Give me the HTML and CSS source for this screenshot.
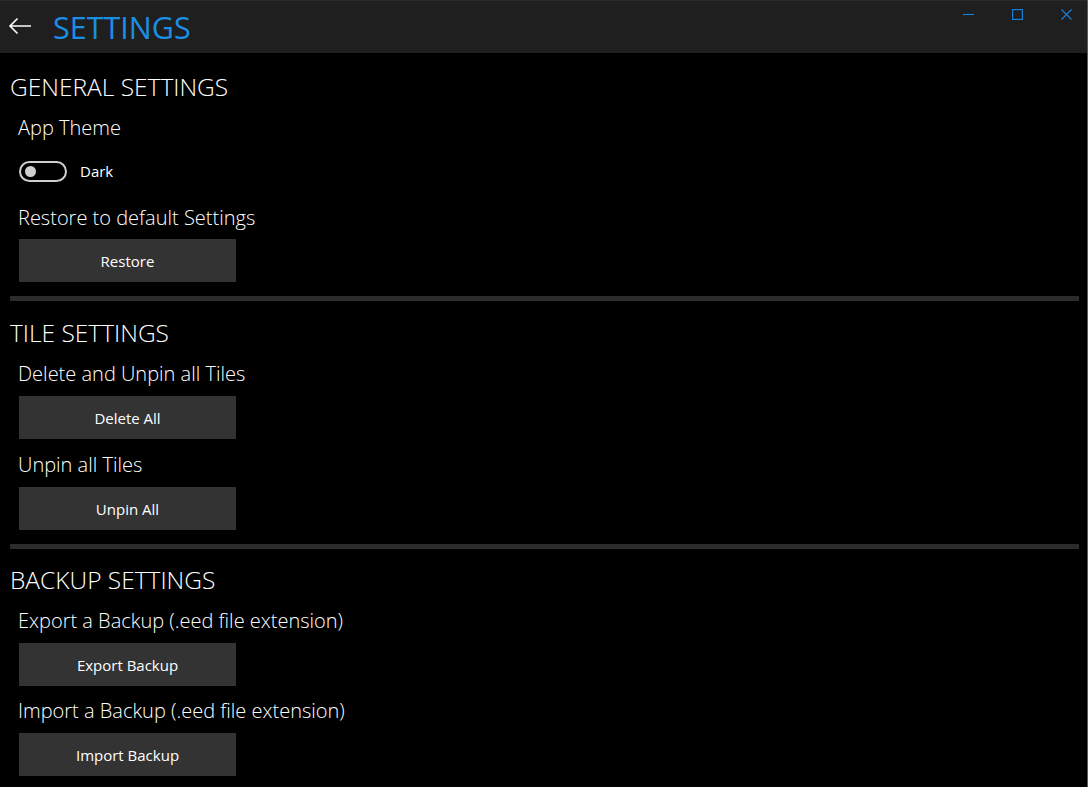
FILE: index.html
```html
<!DOCTYPE html>
<html>
<head>
<meta charset="utf-8">
<link rel="stylesheet" href="styles.css">
</head>
<body>
<div class="window">
  <header class="titlebar">
    <svg class="back" width="24" height="18" viewBox="0 0 24 18"><path d="M23 9H2M9.5 1.5L2 9l7.5 7.5" fill="none" stroke="#fff" stroke-width="1.6"/></svg>
    <h1 class="title">SETTINGS</h1>
    <div class="controls">
      <svg class="ctl" width="11" height="11" viewBox="0 0 11 11"><path d="M0 5.5h11" stroke="#1a7fd4" stroke-width="1.2"/></svg>
      <svg class="ctl" width="11" height="11" viewBox="0 0 11 11"><rect x="0.6" y="0.6" width="9.8" height="9.8" fill="none" stroke="#1a7fd4" stroke-width="1.2"/></svg>
      <svg class="ctl" width="11" height="11" viewBox="0 0 11 11"><path d="M0.5 0.5l10 10M10.5 0.5l-10 10" stroke="#1a7fd4" stroke-width="1.2"/></svg>
    </div>
  </header>
  <main class="content">
    <section class="section first">
      <h2 class="heading">GENERAL SETTINGS</h2>
      <div class="label">App Theme</div>
      <div class="toggle-row">
        <span class="toggle"><span class="knob"></span></span>
        <span class="toggle-text">Dark</span>
      </div>
      <div class="label gap-lg">Restore to default Settings</div>
      <button class="btn">Restore</button>
    </section>
    <div class="divider"></div>
    <section class="section">
      <h2 class="heading">TILE SETTINGS</h2>
      <div class="label">Delete and Unpin all Tiles</div>
      <button class="btn">Delete All</button>
      <div class="label after-btn">Unpin all Tiles</div>
      <button class="btn">Unpin All</button>
    </section>
    <div class="divider"></div>
    <section class="section last">
      <h2 class="heading">BACKUP SETTINGS</h2>
      <div class="label">Export a Backup (.eed file extension)</div>
      <button class="btn">Export Backup</button>
      <div class="label after-btn">Import a Backup (.eed file extension)</div>
      <button class="btn">Import Backup</button>
    </section>
  </main>
</div>
</body>
</html>
```
FILE: styles.css
```css
html, body {
  margin: 0;
  padding: 0;
  background: #000;
}
body {
  font-family: "Open Sans", "Noto Sans", sans-serif;
  color: #fff;
}
.window {
  width: 1088px;
  height: 787px;
  box-sizing: border-box;
  border-right: 1px solid #5a5a5a;
  background: #000;
  overflow: hidden;
}
.titlebar {
  height: 53px;
  background: #1f1f1f;
  display: flex;
  align-items: flex-start;
  box-sizing: border-box;
  border-top: 1px solid #2a2a2a;
}
.back {
  margin: 16px 0 0 8px;
  flex: none;
}
.title {
  margin: 0 0 0 21px;
  font-size: 30.5px;
  font-weight: 400;
  line-height: 53px;
  color: #1b8fe6;
}
.controls {
  margin-left: auto;
  display: flex;
  gap: 38px;
  padding: 8px 15px 0 0;
}
.ctl { display: block; }
.content {
  padding: 0 8px 0 10px;
}
.section {
  display: flex;
  flex-direction: column;
  align-items: flex-start;
  padding-top: 16px;
}
.section.first { padding-top: 18px; }
.section.last { padding-top: 15px; }
.heading {
  margin: 0;
  font-size: 24.5px;
  font-weight: 350;
  line-height: 32px;
}
.label {
  margin: 11px 0 0 8px;
  font-size: 20px;
  font-weight: 300;
  line-height: 28px;
}
.label.after-btn { margin-top: 12px; }
.last .label.after-btn { margin-top: 11px; }
.label.gap-lg { margin-top: 19px; }
.toggle-row {
  margin: 15px 0 0 9px;
  height: 28px;
  display: flex;
  align-items: center;
}
.toggle {
  width: 48px;
  height: 21px;
  box-sizing: border-box;
  border: 2px solid #cfcfcf;
  border-radius: 11px;
  display: flex;
  align-items: center;
  padding-left: 4px;
}
.knob {
  width: 11px;
  height: 11px;
  border-radius: 50%;
  background: #cfcfcf;
}
.toggle-text {
  margin-left: 13px;
  font-size: 15px;
}
.btn {
  margin: 8px 0 0 9px;
  width: 217px;
  height: 43px;
  border: none;
  background: #333;
  color: #fff;
  font-family: "Open Sans", "Noto Sans", sans-serif;
  font-size: 15px;
  padding: 0;
}
.first .btn { margin-top: 7px; }
.divider {
  height: 5px;
  background: #2b2b2b;
  margin-top: 14px;
}
```
